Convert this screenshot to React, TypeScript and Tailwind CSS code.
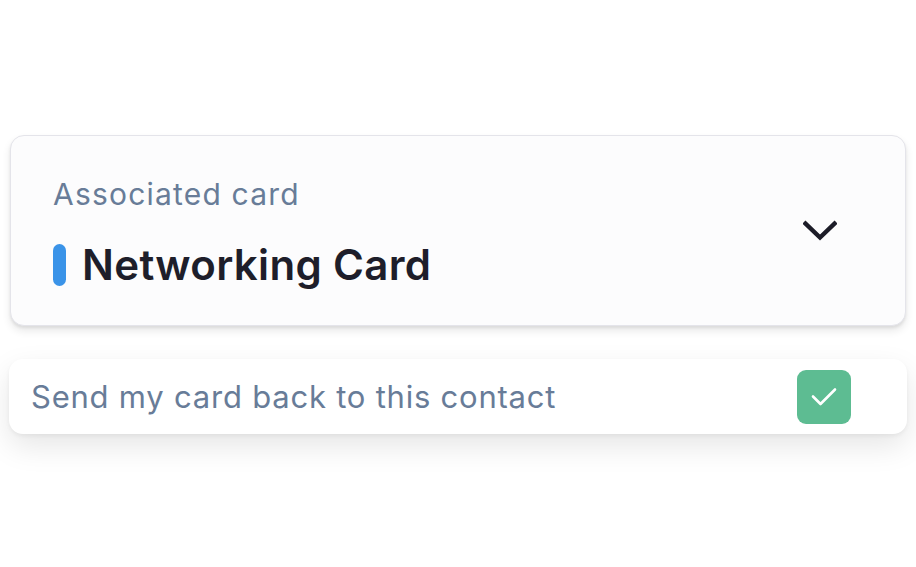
import { useState } from "react";

function ChevronDown() {
  return (
    <svg width="34" height="22" viewBox="0 0 34 22" fill="none">
      <path d="M2.5 3.5 L17 17.5 L31.5 3.5" stroke="#1c1c28" strokeWidth="4.4" strokeLinecap="square" />
    </svg>
  );
}

function CheckMark() {
  return (
    <svg width="26" height="20" viewBox="0 0 26 20" fill="none">
      <path d="M2 9.5 L9.5 17 L24 2.5" stroke="#ffffff" strokeWidth="2.6" strokeLinecap="round" strokeLinejoin="round" />
    </svg>
  );
}

export default function App() {
  const [sendBack, setSendBack] = useState(true);

  return (
    <div
      className="min-h-[567px] w-full bg-white"
      style={{ fontFamily: "Inter, 'Noto Sans', sans-serif" }}
    >
      <div className="flex flex-col gap-[33px] px-[9px] pt-[135px]">
        {/* card selector */}
        <button className="mx-px flex h-[191px] items-center justify-between rounded-[14px] border border-[#e4e4ea] bg-[#fcfcfd] pl-[42px] pr-[68px] text-left shadow-[0_5px_8px_rgba(0,0,0,0.09),0_2px_3px_rgba(0,0,0,0.07)]">
          <div className="mt-[4px] flex flex-col gap-[35px]">
            <span className="text-[30px] leading-none tracking-[0.04em] text-[#687c98]">
              Associated card
            </span>
            <div className="flex items-center gap-[16px]">
              <span className="h-[42px] w-[13px] rounded-full bg-[#3a93e8]" />
              <span className="text-[42px] font-semibold leading-none tracking-[0.008em] text-[#1e1e2a]">
                Networking Card
              </span>
            </div>
          </div>
          <ChevronDown />
        </button>

        {/* send back toggle */}
        <label className="flex h-[75px] cursor-pointer items-center justify-between rounded-[14px] bg-white pl-[22px] pr-[56px] shadow-[0_12px_30px_rgba(0,0,0,0.1),0_2px_4px_rgba(0,0,0,0.05)]">
          <span className="text-[31px] leading-none tracking-[0.025em] text-[#687c98]">
            Send my card back to this contact
          </span>
          <button
            onClick={() => setSendBack(!sendBack)}
            className={`flex h-[54px] w-[54px] items-center justify-center rounded-[9px] ${
              sendBack ? "bg-[#5dbc92]" : "bg-[#e5e7eb]"
            }`}
          >
            {sendBack && <CheckMark />}
          </button>
        </label>
      </div>
    </div>
  );
}
